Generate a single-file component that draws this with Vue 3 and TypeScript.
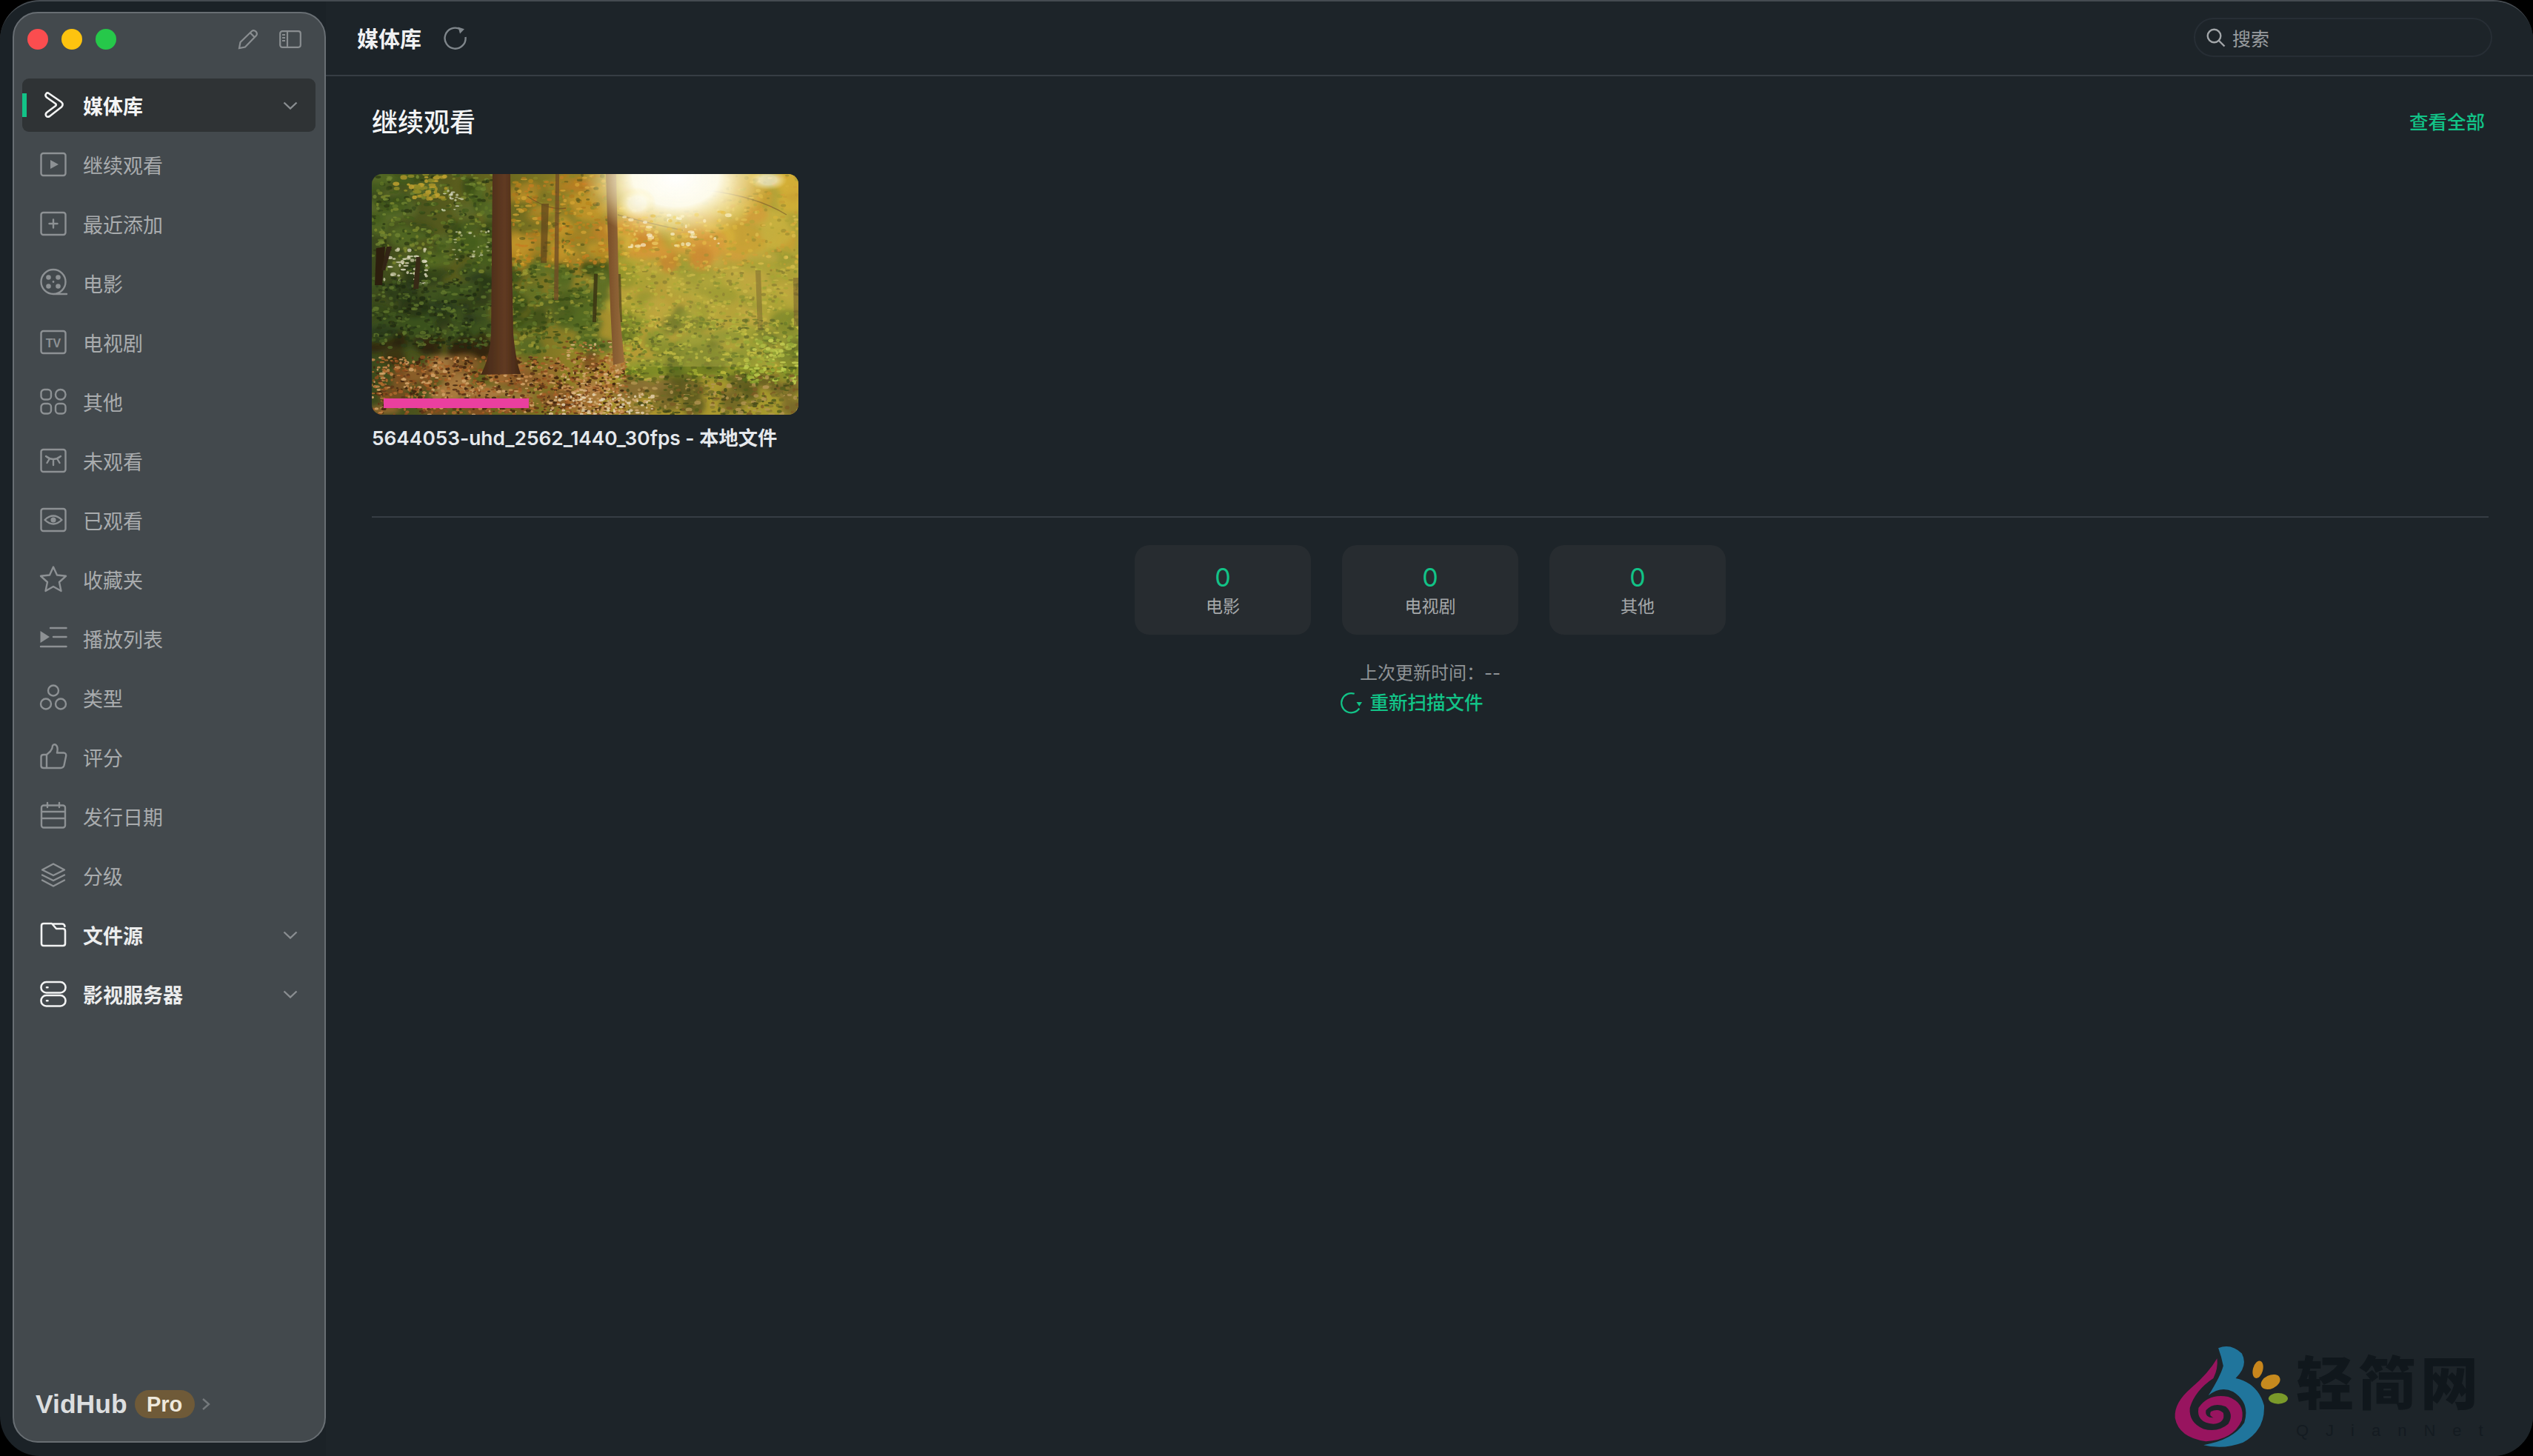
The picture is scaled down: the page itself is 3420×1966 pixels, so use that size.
<template>
  <div class="window">
    <aside class="sidebar">
      <div class="titlebar">
        <div class="lights">
          <span class="light red"></span>
          <span class="light yellow"></span>
          <span class="light green"></span>
        </div>
        <div class="title-tools">
          <svg class="pencil" viewBox="0 0 28 28">
            <path d="M2 26 L3.5 18 L19 3 Q21.5 1 24.5 3.5 Q27 6.5 25 9 L10 24.5 Z M17 5.5 L22.5 11" />
          </svg>
          <svg class="toggle" viewBox="0 0 30 24">
            <rect x="1.2" y="1.2" width="27.6" height="21.6" rx="3" />
            <path d="M11 1.2 V22.8 M4 6 H8 M4 10 H8 M4 14 H8" />
          </svg>
        </div>
      </div>

      <nav class="nav">
        <div
          v-for="item in navItems"
          :key="item.label"
          class="nav-row"
          :class="{ active: item.active, strong: item.strong }"
        >
          <svg class="nav-icon" viewBox="0 0 36 36">
            <path v-if="item.stroke" :d="item.stroke" />
            <path v-if="item.solid" class="solid" :d="item.solid" />
            <text v-if="item.tv" class="tv-text" x="18" y="24.5" text-anchor="middle">TV</text>
          </svg>
          <span class="nav-label">{{ item.label }}</span>
          <svg v-if="item.chevron" class="chevron" viewBox="0 0 20 11">
            <path d="M1.5 1.5 L10 9.5 L18.5 1.5" />
          </svg>
        </div>
      </nav>

      <div class="brand">
        <span class="brand-name">VidHub</span>
        <span class="pro">Pro</span>
        <svg class="brand-arrow" viewBox="0 0 12 18"><path d="M2 2 L10 9 L2 16" /></svg>
      </div>
    </aside>

    <main class="main">
      <header class="topbar">
        <span class="top-title">媒体库</span>
        <svg class="refresh" viewBox="0 0 32 32">
          <path d="M22.5 4.5 A14 14 0 1 0 29.5 15" />
          <path class="tip" d="M19.5 1.5 L28 4.2 L22 10.5 Z" />
        </svg>
        <div class="search">
          <svg class="search-icon" viewBox="0 0 26 26">
            <circle cx="10.5" cy="10.5" r="8.8" />
            <path d="M17 17 L24.5 24.5" />
          </svg>
          <span>搜索</span>
        </div>
      </header>

      <section class="content">
        <div class="section-head">
          <h2>继续观看</h2>
          <a class="see-all">查看全部</a>
        </div>

        <div class="thumb">
          <svg class="forest" viewBox="0 0 576 325" preserveAspectRatio="none">
            <defs>
              <linearGradient id="baseTone" x1="0" x2="1" y1="0" y2="0">
                <stop offset="0" stop-color="#33461c" />
                <stop offset="0.33" stop-color="#6b6a20" />
                <stop offset="0.6" stop-color="#b39a30" />
                <stop offset="1" stop-color="#a8a030" />
              </linearGradient>
              <linearGradient id="haze" x1="0" x2="1" y1="0" y2="0">
                <stop offset="0.5" stop-color="#f0d070" stop-opacity="0" />
                <stop offset="0.75" stop-color="#f0d070" stop-opacity="0.22" />
                <stop offset="1" stop-color="#e8d070" stop-opacity="0.14" />
              </linearGradient>
              <radialGradient id="sunGlow">
                <stop offset="0" stop-color="#ffffff" />
                <stop offset="0.45" stop-color="#fffef2" stop-opacity="0.96" />
                <stop offset="0.75" stop-color="#fff4c0" stop-opacity="0.5" />
                <stop offset="1" stop-color="#ffe890" stop-opacity="0" />
              </radialGradient>
              <linearGradient id="trunkDark" x1="0" x2="1" y1="0" y2="0">
                <stop offset="0" stop-color="#3c2216" />
                <stop offset="0.6" stop-color="#5c3522" />
                <stop offset="1" stop-color="#3a2015" />
              </linearGradient>
              <linearGradient id="trunkLight" x1="0" x2="1" y1="0" y2="0">
                <stop offset="0" stop-color="#6d4326" />
                <stop offset="1" stop-color="#94643a" />
              </linearGradient>
              <filter id="wide"><feGaussianBlur stdDeviation="3.5" /></filter>
              <filter id="soft"><feGaussianBlur stdDeviation="0.6" /></filter>
            </defs>
            <rect width="576" height="325" fill="url(#baseTone)" />
            <g filter="url(#wide)">
              <ellipse
                v-for="(leaf, i) in wash"
                :key="i"
                :cx="leaf.x"
                :cy="leaf.y"
                :rx="leaf.rx"
                :ry="leaf.ry"
                :fill="leaf.color"
                :opacity="leaf.alpha"
              />
            </g>
            <g filter="url(#soft)">
              <ellipse
                v-for="(leaf, i) in leaves"
                :key="i"
                :cx="leaf.x"
                :cy="leaf.y"
                :rx="leaf.rx"
                :ry="leaf.ry"
                :fill="leaf.color"
                :opacity="leaf.alpha"
              />
            </g>
            <g filter="url(#soft)">
              <path d="M248 0 H253 L252 170 H246 Z" fill="#6d4a24" opacity="0.8" />
              <path d="M229 40 H239 L236 120 H228 Z" fill="#5a4020" opacity="0.7" />
              <path d="M6 100 L18 98 L14 150 L4 150 Z" fill="#22180f" />
              <path d="M20 98 L27 98 L18 130 L13 130 Z" fill="#2c1e12" />
              <path d="M60 112 L66 112 L63 155 L56 155 Z" fill="#2e2014" />
              <path d="M330 135 L336 135 L338 200 L332 200 Z" fill="#4a3a1c" opacity="0.8" />
              <path d="M300 135 L305 135 L303 200 L298 200 Z" fill="#2c2412" opacity="0.8" />
              <path d="M518 130 L525 130 L528 210 L521 210 Z" fill="#5a4a20" opacity="0.5" />
              <path d="M569 140 L577 140 L577 205 L570 205 Z" fill="#5a4220" opacity="0.5" />
              <path d="M163 0 H187 L191 215 Q194 250 201 270 L147 271 Q159 250 161 215 Z" fill="url(#trunkDark)" />
              <path d="M316 0 H330 L334 180 L341 254 L326 258 L322 180 Z" fill="url(#trunkLight)" />
              <path d="M332 55 Q380 68 420 76 M452 22 Q520 30 560 55 M210 30 Q240 50 262 46" fill="none" stroke="#6a4a22" stroke-width="1.4" opacity="0.7" />
            </g>
            <rect width="576" height="325" fill="#8a6a20" opacity="0.1" />
            <rect width="576" height="260" fill="url(#haze)" />
            <ellipse cx="410" cy="4" rx="128" ry="88" fill="url(#sunGlow)" />
            <ellipse cx="358" cy="40" rx="26" ry="22" fill="url(#sunGlow)" opacity="0.6" />
            <ellipse cx="535" cy="8" rx="26" ry="14" fill="url(#sunGlow)" opacity="0.6" />
            <ellipse
              v-for="(leaf, i) in sunSpecks"
              :key="i"
              :cx="leaf.x"
              :cy="leaf.y"
              :rx="leaf.rx"
              :ry="leaf.ry"
              :fill="leaf.color"
              :opacity="leaf.alpha"
            />
          </svg>
          <span class="progress"></span>
        </div>
        <p class="thumb-title">5644053-uhd_2562_1440_30fps - 本地文件</p>

        <hr class="divider" />

        <div class="stats">
          <div v-for="stat in stats" :key="stat.label" class="stat-card">
            <span class="stat-num">{{ stat.count }}</span>
            <span class="stat-label">{{ stat.label }}</span>
          </div>
        </div>

        <p class="updated">上次更新时间：--</p>
        <div class="rescan-wrap">
          <a class="rescan">
            <svg class="rescan-icon" viewBox="0 0 32 32">
              <path d="M21 3 A14 14 0 1 0 28 24" />
              <path class="tip" d="M24 15 L32 15 L28 21 Z" />
            </svg>
            重新扫描文件
          </a>
        </div>
      </section>
    </main>

    <div class="watermark">
      <svg class="wm-logo" viewBox="100 100 470 430">
        <path fill="#20759c" d="M280 118 Q332 98 375 140 Q402 190 350 240 Q440 260 465 350 Q470 450 380 500 Q300 530 220 510 Q340 490 385 420 Q410 340 340 295 Q290 270 240 310 Q290 230 300 190 Q292 150 280 118 Z" />
        <path fill="#98145f" d="M275 160 Q240 220 170 280 Q100 340 105 400 Q120 480 230 495 Q340 490 375 410 Q390 340 320 315 Q240 300 200 360 Q190 420 260 425 Q310 420 300 380 Q280 360 250 375 Q240 390 260 400 Q225 400 230 370 Q260 335 310 355 Q345 385 320 425 Q280 460 220 445 Q160 420 165 360 Q185 290 260 240 Q280 200 275 160 Z" />
        <ellipse cx="440" cy="205" rx="20" ry="36" transform="rotate(15 440 205)" fill="#c8861c" />
        <ellipse cx="491" cy="255" rx="41" ry="27" transform="rotate(-25 491 255)" fill="#c68a1e" />
        <ellipse cx="522" cy="322" rx="39" ry="22" fill="#7a9a2a" />
      </svg>
      <div class="wm-text">
        <span class="wm-cn">轻简网</span>
        <span class="wm-en">QJianNet</span>
      </div>
    </div>
  </div>
</template>

<script setup lang="ts">
interface NavItem {
  label: string
  stroke?: string
  solid?: string
  tv?: boolean
  active?: boolean
  strong?: boolean
  chevron?: boolean
}

interface Leaf {
  x: number
  y: number
  rx: number
  ry: number
  color: string
  alpha: number
}

const circle = (cx: number, cy: number, r: number) =>
  `M${cx - r} ${cy}a${r} ${r} 0 1 0 ${r * 2} 0a${r} ${r} 0 1 0 ${-r * 2} 0Z`

const box = (x: number, y: number, w: number, h: number, r: number) =>
  `M${x + r} ${y}h${w - 2 * r}a${r} ${r} 0 0 1 ${r} ${r}v${h - 2 * r}a${r} ${r} 0 0 1 ${-r} ${r}h${2 * r - w}a${r} ${r} 0 0 1 ${-r} ${-r}v${2 * r - h}a${r} ${r} 0 0 1 ${r} ${-r}Z`

const screen = box(1.5, 3, 33, 30, 3)

const navItems: NavItem[] = [
  {
    label: '媒体库',
    active: true,
    chevron: true,
    stroke: 'M11 1.5 L28.5 13.5 Q32.5 17 29 20.5 L13 33 Q9.5 35 8 32 Q7 29.5 9.5 27.5 L21 19 Q22.5 17.5 21 16 L9 7.5 Q6.5 5 8 3 Q9 1 11 1.5 Z',
  },
  { label: '继续观看', stroke: screen, solid: 'M14 12 L25 18 L14 24 Z' },
  { label: '最近添加', stroke: `${screen} M18 12.5 V23.5 M12.5 18 H23.5` },
  {
    label: '电影',
    stroke: `${circle(18, 16.5, 16.5)} M18 33 H36`,
    solid: `${circle(11.5, 10.5, 3.3)} ${circle(24.5, 10.5, 3.3)} ${circle(11.5, 22.5, 3.3)} ${circle(24.5, 22.5, 3.3)} ${circle(18, 16.5, 1.4)}`,
  },
  { label: '电视剧', stroke: screen, tv: true },
  {
    label: '其他',
    stroke: `${box(1.5, 2, 13.5, 13.5, 4.5)} ${box(21, 2, 13.5, 13.5, 6.5)} ${box(1.5, 21, 13.5, 13.5, 4.5)} ${box(21, 21, 13.5, 13.5, 4.5)}`,
  },
  {
    label: '未观看',
    stroke: `${screen} M8 12 Q18 20 28 12 M12.5 16 L9.5 21 M18 18 V24 M23.5 16 L26.5 21`,
  },
  {
    label: '已观看',
    stroke: `${screen} M6.5 18 Q18 7 29.5 18 Q18 29 6.5 18 Z`,
    solid: circle(18, 18, 3.6),
  },
  {
    label: '收藏夹',
    stroke: 'M18 1.5 L23 12.5 L35 13.8 L26 22 L28.5 34 L18 28 L7.5 34 L10 22 L1 13.8 L13 12.5 Z',
  },
  {
    label: '播放列表',
    stroke: 'M14 4 H35.5 M18 16 H35.5 M1 29 H35.5',
    solid: 'M0.5 8 L13 16 L0.5 24 Z',
  },
  { label: '类型', stroke: `${circle(18, 8.5, 7)} ${circle(8, 26.5, 7)} ${circle(28, 26.5, 7)}` },
  {
    label: '评分',
    stroke: 'M9 15 V33 M9 15 L14 10.5 Q17 7 17 3 Q18 0.5 21 1.5 Q25 4 23 12.5 H32 Q36 13 35 17.5 L32.5 29.5 Q31.5 33 28 33 H5 Q1.5 33 1.5 30 V18 Q1.5 15 5 15 H9',
  },
  {
    label: '发行日期',
    stroke: `${box(2, 3.5, 32, 30, 3)} M2 12 H34 M2 21 H34 M10 0 V6 M26 0 V6`,
  },
  {
    label: '分级',
    stroke: 'M18 2.5 L33 10.5 L18 18 L3 10.5 Z M3 17.5 L18 25 L33 17.5 M3 24.5 L18 32.5 L33 24.5',
  },
  {
    label: '文件源',
    strong: true,
    chevron: true,
    stroke: 'M2 6 Q2 3 5 3 H16 L22 10 H31 Q34 10 34 13 V30 Q34 33 31 33 H5 Q2 33 2 30 Z M18 3.5 H30 Q33 3.5 33.5 7',
  },
  {
    label: '影视服务器',
    strong: true,
    chevron: true,
    stroke: `${box(1.5, 2, 33, 14.5, 7)} ${box(1.5, 20, 33, 14.5, 7)} M9 9.2 H10.5 M9 27.2 H10.5`,
  },
]

const stats = [
  { label: '电影', count: 0 },
  { label: '电视剧', count: 0 },
  { label: '其他', count: 0 },
]

// 缩略图没有图片文件，用随机色块堆出树林
let seed = 5644053
const rand = () => {
  seed = (seed * 16807) % 2147483647
  return seed / 2147483647
}

const scatter = (
  x: number,
  y: number,
  w: number,
  h: number,
  count: number,
  size: number,
  colors: string[],
  alpha = 0.85,
): Leaf[] =>
  Array.from({ length: count }, () => ({
    x: +(x + rand() * w).toFixed(1),
    y: +(y + rand() * h).toFixed(1),
    rx: +(size * (0.5 + rand())).toFixed(1),
    ry: +(size * (0.35 + rand() * 0.6)).toFixed(1),
    color: colors[Math.floor(rand() * colors.length)],
    alpha,
  }))

// 大块底色
const wash: Leaf[] = [
  ...scatter(0, 0, 165, 130, 50, 16, ['#3c5a1e', '#4d6a24', '#55692a', '#2d4518']),
  ...scatter(0, 130, 165, 100, 50, 18, ['#22361a', '#2b4219', '#1f3116', '#34501e']),
  ...scatter(0, 222, 170, 26, 22, 13, ['#2a2010', '#241f0e', '#33280f']),
  ...scatter(190, 0, 130, 125, 40, 16, ['#b98a22', '#c89a2c', '#a88526', '#c47f24']),
  ...scatter(188, 125, 130, 115, 40, 16, ['#3f5a1c', '#4f6a24', '#5d7226', '#324a18']),
  ...scatter(335, 0, 241, 115, 60, 20, ['#d8b030', '#dfb93e', '#c99c2a', '#c8b238', '#d69632']),
  ...scatter(335, 110, 241, 90, 50, 20, ['#a2a02e', '#b0a834', '#8c9428', '#bca63a']),
  ...scatter(335, 190, 241, 85, 50, 18, ['#6a7f22', '#7c8f28', '#8d9a2c', '#55691e']),
  ...scatter(350, 65, 110, 55, 14, 18, ['#cf8426', '#d99230', '#c87a24']),
  ...scatter(0, 250, 350, 75, 40, 16, ['#8a5a2c', '#a06a34', '#7a4a22', '#b07c44']),
  ...scatter(345, 275, 231, 50, 30, 16, ['#6a6224', '#7a6a2c', '#55561e', '#8a7036']),
]

// 细碎的叶子
const leaves: Leaf[] = [
  ...scatter(0, 0, 165, 135, 420, 3, ['#3c5a1e', '#5d7a28', '#7d8f30', '#2d4518', '#6f8a34', '#1f3214'], 0.75),
  ...scatter(30, 0, 70, 35, 45, 3.5, ['#b09a2c', '#c8a832', '#8f8e28']),
  ...scatter(95, 20, 30, 30, 16, 2, ['#dfe3d4', '#ccd4b4'], 0.8),
  ...scatter(15, 100, 60, 50, 45, 2.8, ['#d8d8c0', '#e6e6d2', '#c4c8a8'], 0.85),
  ...scatter(110, 75, 50, 40, 30, 1.8, ['#dde0c8', '#b6c08c'], 0.7),
  ...scatter(0, 140, 165, 95, 420, 3, ['#22361a', '#3a5520', '#4d6a28', '#1c2c14', '#607c30', '#16220f'], 0.75),
  ...scatter(190, 0, 130, 125, 320, 3, ['#c08a20', '#e0ac36', '#b57a20', '#8a8a28', '#cf7f22', '#5a5a1c'], 0.7),
  ...scatter(188, 122, 125, 120, 380, 3, ['#3f5a1c', '#5f7a2c', '#7d8d30', '#2b4216', '#a0a036'], 0.7),
  ...scatter(335, 0, 241, 130, 520, 2.8, ['#e0b838', '#eac850', '#c89828', '#a8a02c', '#d89a30', '#8f8024'], 0.65),
  ...scatter(335, 125, 241, 85, 440, 2.6, ['#9aa82c', '#c0b83a', '#6f8424', '#d0c048', '#6f6a24'], 0.65),
  ...scatter(335, 195, 241, 85, 520, 2.8, ['#4f6e1e', '#7c9628', '#a4b434', '#3c5218', '#c4c440', '#5f6a20'], 0.75),
  ...scatter(505, 220, 71, 65, 110, 3, ['#a8c040', '#c4d854', '#86a430'], 0.85),
  ...scatter(0, 247, 345, 78, 1300, 2.4, ['#8a4a20', '#b06a30', '#c88a50', '#5a3018', '#d8a870', '#3a2010', '#a45c28'], 0.9),
  ...scatter(345, 272, 231, 53, 340, 3, ['#6a6a24', '#4a5a1c', '#8a7a30', '#b89a58', '#3c4418', '#7a5a26'], 0.8),
  ...scatter(255, 225, 85, 100, 220, 2.2, ['#d09860', '#e4c090', '#b47436', '#7a4420'], 0.85),
  ...scatter(240, 297, 140, 28, 110, 2.2, ['#ecd8b8', '#f0e4c8', '#d8b07c'], 0.85),
]

// 逆光边缘的碎光
const sunSpecks: Leaf[] = scatter(335, 50, 150, 50, 60, 3, ['#fff7d0', '#f4d870', '#e8c048', '#fffbe6'], 0.6)
</script>

<style scoped>
.window {
  position: relative;
  box-sizing: border-box;
  width: 3420px;
  height: 1966px;
  display: flex;
  padding: 16px 0 18px 17px;
  background: #1b2227;
  border-top: 2px solid #454b51;
  border-radius: 54px;
  overflow: hidden;
  font-family: 'Inter', 'Noto Sans CJK SC', sans-serif;
  color: #eceef0;
}

.sidebar {
  box-sizing: border-box;
  flex: 0 0 423px;
  display: flex;
  flex-direction: column;
  margin-top: -2px;
  padding: 0 12px 0 11px;
  background: #43494d;
  border: 2px solid #686e73;
  border-radius: 34px;
  z-index: 1;
}

.titlebar {
  height: 70px;
  margin-bottom: 18px;
  display: flex;
  align-items: center;
  justify-content: space-between;
  padding: 0 19px 0 7px;
  flex-shrink: 0;
}

.lights {
  display: flex;
  gap: 18px;
}

.light {
  width: 28px;
  height: 28px;
  border-radius: 50%;
}

.light.red { background: #fb4d4f; }
.light.yellow { background: #fdc30f; }
.light.green { background: #26c84a; }

.title-tools {
  display: flex;
  align-items: center;
  gap: 28px;
}

.pencil {
  width: 28px;
  height: 28px;
}

.toggle {
  width: 30px;
  height: 24px;
}

.pencil path,
.toggle rect,
.toggle path {
  fill: none;
  stroke: #8a8e91;
  stroke-width: 2.2;
}

.nav {
  display: flex;
  flex-direction: column;
  gap: 8px;
}

.nav-row {
  position: relative;
  height: 72px;
  display: flex;
  align-items: center;
  padding: 0 24px 0 24px;
  border-radius: 9px;
  font-size: 27px;
  color: #a9acae;
}

.nav-row.active {
  background: #2f3335;
  color: #f4f5f5;
  font-weight: 700;
}

.nav-row.active::before {
  content: '';
  position: absolute;
  left: 0;
  top: 20px;
  width: 6px;
  height: 32px;
  background: #12c387;
}

.nav-row.strong {
  color: #eceded;
  font-weight: 700;
}

.nav-icon {
  flex: 0 0 36px;
  width: 36px;
  height: 36px;
  overflow: visible;
}

.nav-icon path {
  fill: none;
  stroke: #8d9194;
  stroke-width: 2.4;
  stroke-linejoin: round;
  stroke-linecap: round;
}

.nav-icon path.solid {
  fill: #8d9194;
  stroke: none;
}

.nav-row.active .nav-icon path,
.nav-row.strong .nav-icon path {
  stroke: #f2f3f3;
  stroke-width: 2.6;
}

.tv-text {
  font-family: 'Liberation Sans', sans-serif;
  font-size: 16px;
  font-weight: 700;
  fill: #8d9194;
}

.nav-label {
  margin-left: 22px;
}

.chevron {
  width: 20px;
  height: 11px;
  margin-left: auto;
}

.chevron path {
  fill: none;
  stroke: #8a8e91;
  stroke-width: 2.4;
}

.brand {
  margin-top: auto;
  margin-bottom: 31px;
  padding-left: 18px;
  display: flex;
  align-items: center;
  height: 38px;
}

.brand-name {
  font-family: 'Liberation Sans', sans-serif;
  font-size: 35.5px;
  font-weight: 700;
  color: #dcdedf;
}

.pro {
  margin-left: 10px;
  width: 81px;
  height: 38px;
  border-radius: 19px;
  background: #6f5a38;
  color: #eee8dc;
  font-family: 'Liberation Sans', sans-serif;
  font-size: 29px;
  font-weight: 700;
  line-height: 38px;
  text-align: center;
}

.brand-arrow {
  width: 12px;
  height: 18px;
  margin-left: 9px;
}

.brand-arrow path {
  fill: none;
  stroke: #74797c;
  stroke-width: 2.4;
}

.main {
  flex: 1;
  display: flex;
  flex-direction: column;
  margin-top: -18px;
  margin-bottom: -18px;
  background: #1d2429;
}

.topbar {
  box-sizing: border-box;
  flex: 0 0 103px;
  display: flex;
  align-items: center;
  padding: 0 55px 0 42px;
  border-bottom: 2px solid #363d44;
}

.top-title {
  font-size: 29px;
  font-weight: 700;
  color: #f0f1f2;
}

.refresh {
  width: 32px;
  height: 32px;
  margin-left: 30px;
}

.refresh path {
  fill: none;
  stroke: #7f868b;
  stroke-width: 2.4;
}

.refresh path.tip {
  fill: #7f868b;
  stroke: none;
}

.search {
  box-sizing: border-box;
  margin-left: auto;
  width: 403px;
  height: 53px;
  display: flex;
  align-items: center;
  gap: 9px;
  padding-left: 15px;
  border: 2px solid #272e35;
  border-radius: 27px;
  font-size: 25px;
  color: #989c9f;
}

.search-icon {
  width: 26px;
  height: 26px;
}

.search-icon circle,
.search-icon path {
  fill: none;
  stroke: #a2a6a9;
  stroke-width: 2.4;
}

.content {
  padding: 29px 60px 0 62px;
}

.section-head {
  height: 60px;
  display: flex;
  align-items: center;
  justify-content: space-between;
}

.section-head h2 {
  margin: 0;
  font-size: 35px;
  font-weight: 500;
  color: #f3f4f5;
}

.see-all {
  margin-right: 5px;
  font-size: 25.5px;
  font-weight: 500;
  color: #12c387;
}

.thumb {
  position: relative;
  margin-top: 43px;
  width: 576px;
  height: 325px;
  border-radius: 14px;
  overflow: hidden;
}

.forest {
  display: block;
  width: 100%;
  height: 100%;
}

.progress {
  position: absolute;
  left: 16px;
  bottom: 9px;
  width: 196px;
  height: 13px;
  background: #ea3f9f;
}

.thumb-title {
  margin: 16px 0 0;
  font-size: 26.3px;
  font-weight: 600;
  line-height: 32px;
  color: #e4e8ec;
}

.divider {
  margin: 89px 0 0;
  height: 2px;
  border: 0;
  background: #363d44;
}

.stats {
  display: flex;
  justify-content: center;
  gap: 42px;
  margin-top: 37px;
}

.stat-card {
  box-sizing: border-box;
  width: 238px;
  height: 121px;
  padding-top: 24px;
  display: flex;
  flex-direction: column;
  align-items: center;
  background: #272c30;
  border-radius: 20px;
}

.stat-num {
  font-size: 34px;
  line-height: 40px;
  color: #12c387;
}

.stat-label {
  margin-top: 4px;
  font-size: 23px;
  line-height: 30px;
  color: #a5a8aa;
}

.updated {
  margin: 37px 0 0;
  font-size: 24px;
  line-height: 30px;
  text-align: center;
  color: #8f9396;
}

.rescan-wrap {
  margin-top: 8px;
  display: flex;
  justify-content: center;
  padding-right: 50px;
}

.rescan {
  display: flex;
  align-items: center;
  gap: 10px;
  font-size: 25.5px;
  line-height: 34px;
  font-weight: 500;
  color: #12c387;
}

.rescan-icon {
  width: 30px;
  height: 30px;
  overflow: visible;
}

.rescan-icon path {
  fill: none;
  stroke: #12c387;
  stroke-width: 2.4;
}

.rescan-icon path.tip {
  fill: #12c387;
  stroke: none;
}

.watermark {
  position: absolute;
  left: 2935px;
  top: 1812px;
  display: flex;
  gap: 8px;
  z-index: 2;
}

.wm-logo {
  width: 157px;
  height: 144px;
}

.wm-text {
  margin-top: 4px;
  display: flex;
  flex-direction: column;
}

.wm-cn {
  font-family: 'Noto Sans CJK SC', sans-serif;
  font-size: 78px;
  font-weight: 900;
  line-height: 90px;
  letter-spacing: 6px;
  color: #10171c;
}

.wm-en {
  margin-top: 12px;
  font-family: 'Liberation Sans', sans-serif;
  font-size: 22px;
  line-height: 24px;
  letter-spacing: 23px;
  color: #141b21;
}
</style>

<style>
html,
body {
  margin: 0;
  background: #000;
}
</style>
